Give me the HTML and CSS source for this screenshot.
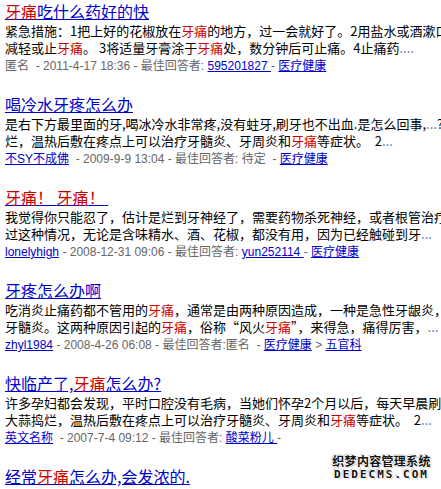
FILE: index.html
```html
<!DOCTYPE html>
<html lang="zh-CN">
<head>
<meta charset="utf-8">
<title>牙痛 - 搜索结果</title>
<link rel="stylesheet" href="styles.css">
</head>
<body>
<div class="results">
  <div class="item">
    <div class="title"><a href="#"><em>牙痛</em>吃什么药好的快</a></div>
    <div class="line">紧急措施：1把上好的花椒放在<em>牙痛</em>的地方，过一会就好了。2用盐水或酒漱口，</div>
    <div class="line">减轻或止<em>牙痛</em>。 3将适量牙膏涂于<em>牙痛</em>处，数分钟后可止痛。4止痛药<span class="dots">....</span></div>
    <div class="meta">匿名 &nbsp;- 2011-4-17 18:36 - 最佳回答者: <a href="#">595201827 </a> - <a href="#">医疗健康</a></div>
  </div>
  <div class="item">
    <div class="title"><a href="#">喝冷水牙疼怎么办</a></div>
    <div class="line">是右下方最里面的牙,喝冰冷水非常疼,没有蛀牙,刷牙也不出血.是怎么回事,<span class="dots">...</span>?</div>
    <div class="line">烂，温热后敷在疼点上可以治疗牙髓炎、牙周炎和<em>牙痛</em>等症状。 &nbsp;2<span class="dots">...</span></div>
    <div class="meta"><a href="#">不SY不成佛</a> &nbsp;- 2009-9-9 13:04 - 最佳回答者: 待定 &nbsp;- <a href="#">医疗健康</a></div>
  </div>
  <div class="item">
    <div class="title"><a href="#"><em>牙痛</em><em>！ </em><em>牙痛</em><em>！</em>&nbsp;</a></div>
    <div class="line">我觉得你只能忍了，估计是烂到牙神经了，需要药物杀死神经，或者根管治疗，</div>
    <div class="line">过这种情况，无论是含味精水、酒、花椒，都没有用，因为已经触碰到牙<span class="dots">...</span></div>
    <div class="meta"><a href="#">lonelyhigh</a> - 2008-12-31 09:06 - 最佳回答者: <a href="#">yun252114 </a> - <a href="#">医疗健康</a></div>
  </div>
  <div class="item">
    <div class="title"><a href="#">牙疼怎么办啊</a></div>
    <div class="line">吃消炎止痛药都不管用的<em>牙痛</em>，通常是由两种原因造成，一种是急性牙龈炎，</div>
    <div class="line">牙髓炎。这两种原因引起的<em>牙痛</em>，俗称“风火<em>牙痛</em>”，来得急，痛得厉害，<span class="dots">...</span></div>
    <div class="meta"><a href="#">zhyl1984</a> - 2008-4-26 06:08 - 最佳回答者:匿名 &nbsp;- <a href="#">医疗健康</a> &gt; <a href="#">五官科</a></div>
  </div>
  <div class="item">
    <div class="title"><a href="#">快临产了,<em>牙痛</em>怎么办?</a></div>
    <div class="line">许多孕妇都会发现，平时口腔没有毛病，当她们怀孕2个月以后，每天早晨刷牙</div>
    <div class="line">大蒜捣烂，温热后敷在疼点上可以治疗牙髓炎、牙周炎和<em>牙痛</em>等症状。 &nbsp;2<span class="dots">...</span></div>
    <div class="meta"><a href="#">英文名称</a> &nbsp;- 2007-7-4 09:12 - 最佳回答者: <a href="#">酸菜粉儿 </a> -</div>
  </div>
  <div class="item">
    <div class="title"><a href="#">经常<em>牙痛</em>怎么办,会发浓的.</a></div>
  </div>
</div>
<div class="watermark">
  <div class="wm-cn">织梦内容管理系统</div>
  <div class="wm-en">DEDECMS.COM</div>
</div>
</body>
</html>
```

FILE: styles.css
```css
html, body {
  margin: 0;
  padding: 0;
  background: #fff;
  overflow: hidden;
}
body {
  width: 441px;
  height: 489px;
  position: relative;
  font-family: "Noto Sans CJK SC", "Liberation Sans", sans-serif;
}
.results {
  padding-left: 5px;
  width: 700px;
}
.item {
  margin-bottom: 17px;
}
.title {
  height: 22px;
  line-height: 22px;
  font-size: 16px;
  white-space: nowrap;
}
.title a {
  color: #0000cc;
  text-decoration: underline;
}
em {
  font-style: normal;
  color: #c00;
}
.line {
  height: 17px;
  line-height: 17px;
  font-size: 13px;
  color: #000;
  white-space: nowrap;
}
.dots {
  color: #5470b8;
}
.meta {
  height: 20px;
  line-height: 20px;
  font-size: 12px;
  color: #666;
  white-space: nowrap;
  font-family: "Liberation Sans", "Noto Sans CJK SC", sans-serif;
}
.meta a {
  color: #0000cc;
  text-decoration: underline;
}
.watermark {
  position: absolute;
  left: 332px;
  top: 453px;
  width: 99px;
  text-align: center;
  color: #111;
  font-weight: bold;
  text-shadow: 1px 0 0 #fff, -1px 0 0 #fff, 0 1px 0 #fff, 0 -1px 0 #fff, 1px 1px 1px #999, -1px -1px 1px #999;
}
.wm-cn {
  font-size: 12px;
  line-height: 15px;
  font-family: "Noto Sans CJK SC", sans-serif;
  letter-spacing: 0.3px;
}
.wm-en {
  font-size: 11px;
  line-height: 14px;
  font-family: "DejaVu Sans Mono", monospace;
  letter-spacing: 2px;
}
```
